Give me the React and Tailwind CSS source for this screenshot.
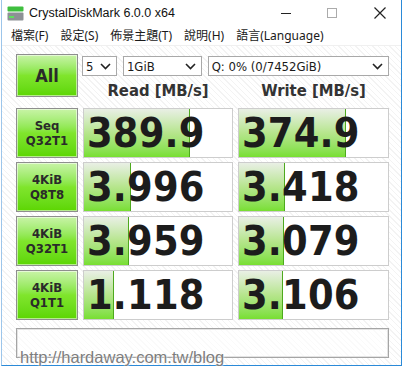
import React from 'react';

const rows = [
  { l1: 'Seq', l2: 'Q32T1', read: '389.9', readBar: 106, write: '374.9', writeBar: 107 },
  { l1: '4KiB', l2: 'Q8T8', read: '3.996', readBar: 47, write: '3.418', writeBar: 46 },
  { l1: '4KiB', l2: 'Q32T1', read: '3.959', readBar: 45, write: '3.079', writeBar: 45 },
  { l1: '4KiB', l2: 'Q1T1', read: '1.118', readBar: 30, write: '3.106', writeBar: 44 },
];

const menus = ['檔案(F)', '設定(S)', '佈景主題(T)', '說明(H)', '語言(Language)'];

function Chevron() {
  return (
    <svg width="11" height="7" viewBox="0 0 11 7">
      <polyline points="1,1 5.5,5.5 10,1" fill="none" stroke="#222" strokeWidth="1.6" />
    </svg>
  );
}

function Select({ value, className }) {
  return (
    <div className={`flex h-[20px] items-center justify-between border border-[#a9a9a9] bg-white pl-[3px] pr-[5px] text-[13px] text-[#1a1a1a] ${className}`}>
      <span className="leading-none">{value}</span>
      <Chevron />
    </div>
  );
}

function GreenButton({ children, className }) {
  return (
    <div className={`flex flex-col items-center justify-center border border-[#8e8e8e] bg-linear-to-b from-[#c8f3a6] via-[#80e52c] to-[#5cd600] font-bold leading-[15px] text-[#2a2a2a] shadow-[inset_0_0_0_1px_rgba(255,255,255,0.55)] ${className}`}>
      {children}
    </div>
  );
}

function ValueBox({ value, bar }) {
  return (
    <div className="relative h-full border border-[#cdcdcd] bg-white">
      <div
        className="absolute top-0 bottom-0 left-0 border-r border-[#4ea91e] bg-linear-to-b from-[#e9efe5] via-[#b6e58c] to-[#78df30]"
        style={{ width: bar }}
      />
      <div className="relative flex h-full items-center pl-[3px] text-[41px] font-bold leading-none tracking-[0.2px] text-[#1c1c1c]">
        {value}
      </div>
    </div>
  );
}

export default function App() {
  return (
    <div className="relative h-[369px] w-[406px] overflow-hidden bg-white" style={{ fontFamily: '"DejaVu Sans Condensed", "DejaVu Sans", sans-serif' }}>
      <div className="ml-[1px] flex h-[366px] w-[401px] flex-col border-r border-b border-l border-r-[#2b8ad8] border-b-[#2b8ad8] border-l-[#9cc5ea]">
        {/* title bar */}
        <div className="flex h-[26px] items-center font-['Liberation_Sans',sans-serif] text-[12.5px] text-[#111]">
          <svg className="ml-[5px]" width="17" height="15" viewBox="0 0 17 15">
            <rect x="0.5" y="0.5" width="16" height="5" rx="1" fill="#3fbf3f" />
            <rect x="0.5" y="6.5" width="16" height="8" rx="1" fill="#8d9195" />
            <rect x="2" y="10" width="5" height="2" fill="#5ee05e" />
          </svg>
          <span className="ml-[5px]">CrystalDiskMark 6.0.0 x64</span>
          <div className="ml-auto flex items-center">
            <div className="flex h-[26px] w-[46px] items-center justify-center">
              <div className="h-px w-[10px] bg-[#222]" />
            </div>
            <div className="flex h-[26px] w-[46px] items-center justify-center">
              <div className="h-[10px] w-[10px] border border-[#ababab]" />
            </div>
            <div className="flex h-[26px] w-[46px] items-center justify-center pl-[3px]">
              <svg width="12" height="12" viewBox="0 0 12 12">
                <path d="M0.5 0.5 L11.5 11.5 M11.5 0.5 L0.5 11.5" stroke="#222" strokeWidth="1.2" />
              </svg>
            </div>
          </div>
        </div>

        {/* menu bar */}
        <div className="flex h-[20px] items-center gap-[12px] border-b border-[#f0f0f0] pl-[9px] font-['Noto_Sans','Noto_Sans_CJK_TC',sans-serif] text-[12px] text-[#1a1a1a]">
          {menus.map(m => (
            <span key={m} className="leading-none">{m}</span>
          ))}
        </div>

        {/* client area */}
        <div className="flex-1 bg-[repeating-linear-gradient(45deg,#ffffff_0px,#ffffff_3px,#f3f3f3_3px,#f3f3f3_4px)] pt-[8px] pl-[14px]">
          <div className="grid h-[46px] grid-cols-[62px_150px_151px] gap-x-[5px]">
            <GreenButton className="h-[43px] text-[18px]">All</GreenButton>
            <div className="col-span-2 flex flex-col">
              <div className="mt-[2px] ml-[-1px] flex gap-[6px]">
                <Select value="5" className="w-[35px]" />
                <Select value="1GiB" className="w-[79px]" />
                <Select value="Q: 0% (0/7452GiB)" className="w-[182px]" />
              </div>
              <div className="mt-[5px] grid grid-cols-[150px_151px] gap-x-[5px] text-[16.5px] font-bold leading-[19px] text-[#333]">
                <div className="text-center">Read [MB/s]</div>
                <div className="text-center">Write [MB/s]</div>
              </div>
            </div>
          </div>

          <div className="mt-[8px] flex flex-col gap-[4px]">
            {rows.map((r, i) => (
              <div key={i} className="grid h-[50px] grid-cols-[62px_150px_151px] gap-x-[5px]">
                <GreenButton className="h-full text-[13px]">
                  <span>{r.l1}</span>
                  <span>{r.l2}</span>
                </GreenButton>
                <ValueBox value={r.read} bar={r.readBar} />
                <ValueBox value={r.write} bar={r.writeBar} />
              </div>
            ))}
          </div>

          <div className="mt-[8px] h-[30px] w-[373px] border border-[#a5a5a5] bg-white/60 shadow-[inset_0_0_0_1px_#e4e4e4]" />
        </div>
      </div>

      {/* watermark */}
      <div className="absolute top-[349px] left-[20px] font-['Liberation_Sans',sans-serif] text-[16.5px] leading-none text-[#7d7d7d] [text-shadow:0_0_2px_#fff,0_0_2px_#fff]">
        http://hardaway.com.tw/blog
      </div>
    </div>
  );
}
